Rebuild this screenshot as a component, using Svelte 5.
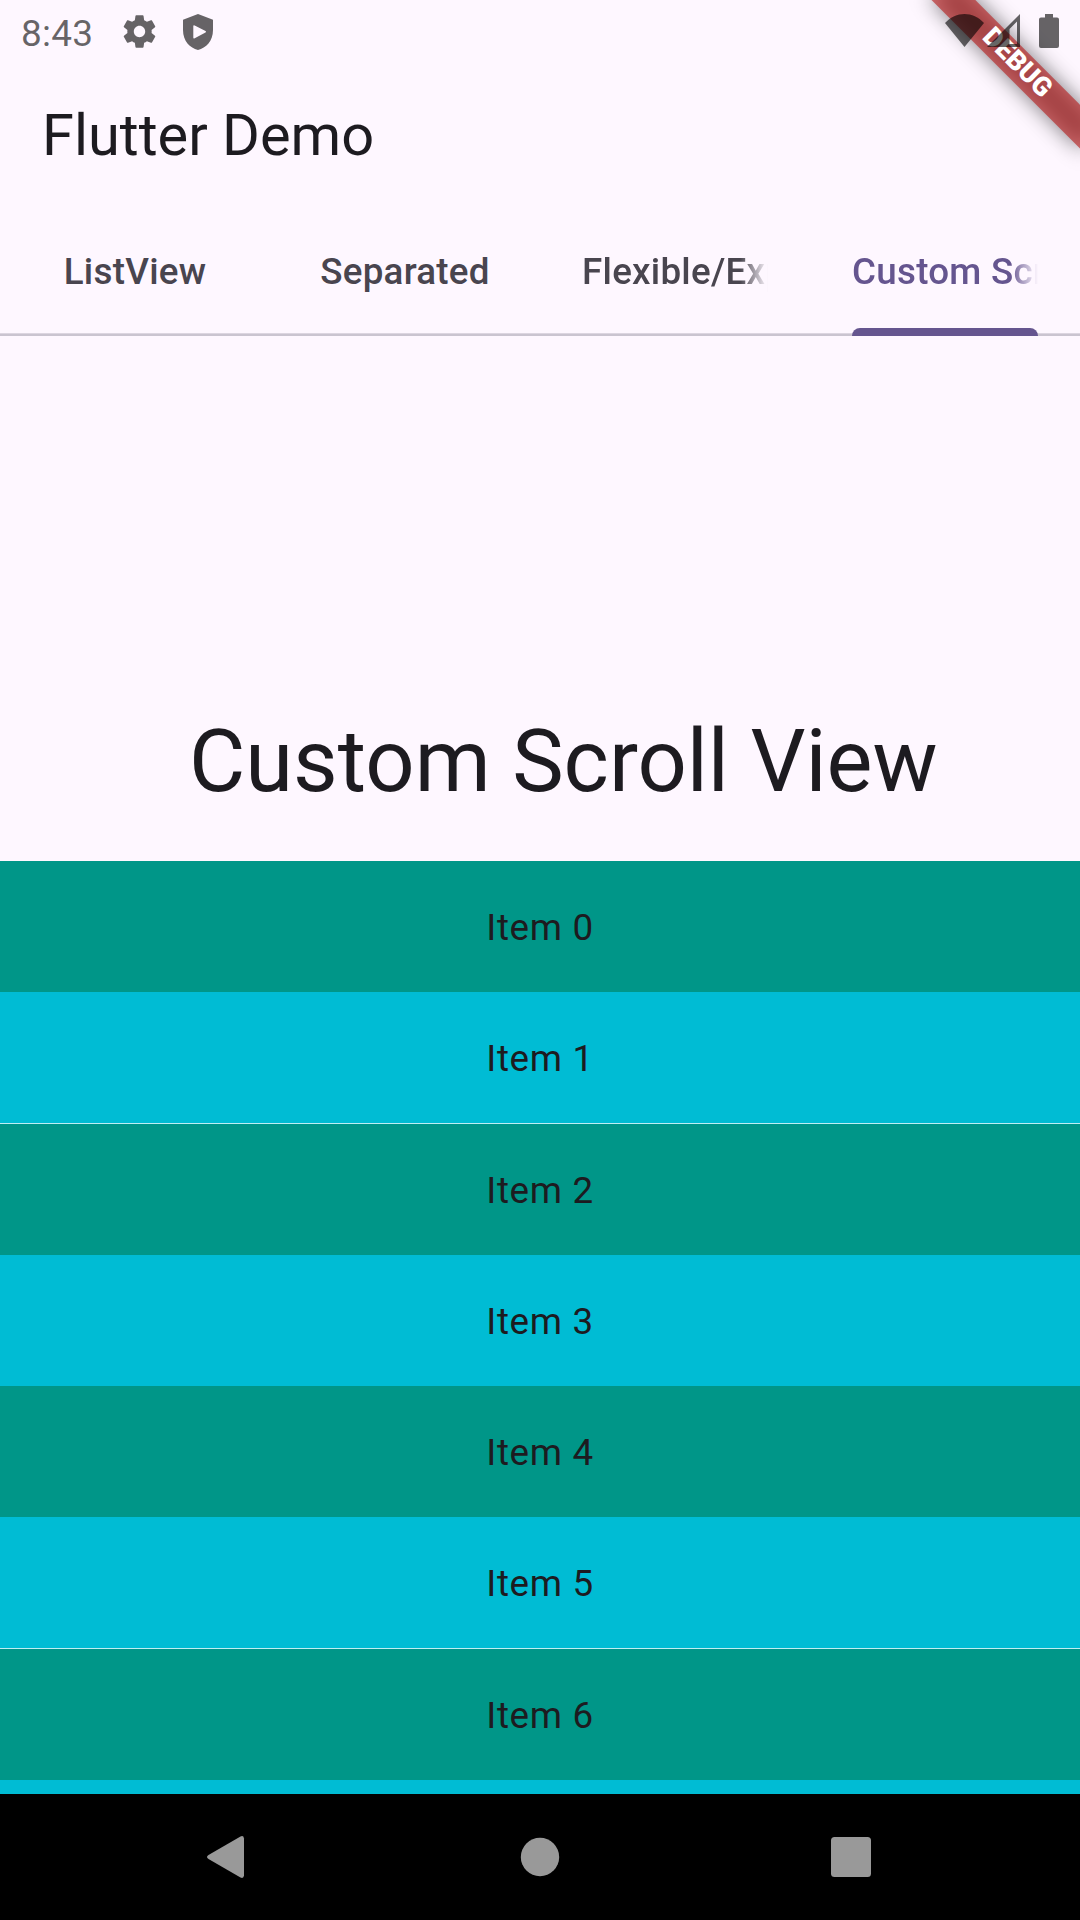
<script>
  const tabs = ['ListView', 'Separated', 'Flexible/Expanded', 'Custom Scroll View'];
  const active = 3;
  const items = Array.from({ length: 8 }, (_, i) => `Item ${i}`);
</script>

<div class="screen">
  <header class="status">
    <div class="left">
      <span class="clock">8:43</span>
      <svg class="gear" viewBox="0 0 24 24"><path d="M19.43 12.98c.04-.32.07-.64.07-.98s-.03-.66-.07-.98l2.11-1.65c.19-.15.24-.42.12-.64l-2-3.46c-.12-.22-.39-.3-.61-.22l-2.49 1c-.52-.4-1.08-.73-1.69-.98l-.38-2.65C14.46 2.18 14.25 2 14 2h-4c-.25 0-.46.18-.49.42l-.38 2.65c-.61.25-1.17.59-1.69.98l-2.49-1c-.23-.09-.49 0-.61.22l-2 3.46c-.13.22-.07.49.12.64l2.11 1.65c-.04.32-.07.65-.07.98s.03.66.07.98l-2.11 1.65c-.19.15-.24.42-.12.64l2 3.46c.12.22.39.3.61.22l2.49-1c.52.4 1.08.73 1.69.98l.38 2.65c.03.24.24.42.49.42h4c.25 0 .46-.18.49-.42l.38-2.65c.61-.25 1.17-.59 1.69-.98l2.49 1c.23.09.49 0 .61-.22l2-3.46c.12-.22.07-.49-.12-.64l-2.11-1.65zM12 15.5c-1.93 0-3.500-1.570-3.500-3.500s1.570-3.500 3.500-3.500 3.500 1.570 3.500 3.500-1.570 3.500-3.500 3.500z"/></svg>
      <svg class="shield" viewBox="0 0 30 36"><path fill-rule="evenodd" d="M15 0 30 5.700V16C30 27 23 34 15 36 7 34 0 27 0 16V5.700ZM10.300 12.300Q10.300 10.800 11.700 11.500L22.500 17Q23.700 17.800 22.500 18.600L11.700 24.200Q10.300 24.800 10.300 23.500Z"/></svg>
    </div>
    <div class="right">
      <svg class="wifi" viewBox="0 0 39 33"><path d="M0 9C11-3 28-3 39 9L19.500 33Z"/></svg>
      <svg class="cell" viewBox="0 0 33 33"><path fill-rule="evenodd" d="M33 0V33H0ZM30 7.500 22.500 15V30H30Z"/></svg>
      <svg class="battery" viewBox="0 0 20 34"><path d="M6 0h8v3.500h4a2 2 0 0 1 2 2V32a2 2 0 0 1-2 2H2a2 2 0 0 1-2-2V5.500a2 2 0 0 1 2-2h4z"/></svg>
    </div>
  </header>

  <h1 class="title">Flutter Demo</h1>

  <nav class="tabs">
    {#each tabs as tab, i}
      <div class="tab" class:active={i === active}>
        <span class="label" class:faded={i > 1}>{tab}</span>
      </div>
    {/each}
  </nav>

  <section class="hero"><h2>Custom Scroll View</h2></section>

  <main class="list">
    {#each items as item}
      <div class="item">{item}</div>
    {/each}
  </main>

  <footer class="navbar">
    <svg viewBox="0 0 48 48"><path d="M43 5.500V42.500Q42.500 46 39.500 44.500L7.500 26Q4.500 24 7.500 22L39.500 3.500Q42.500 2 43 5.500Z"/></svg>
    <svg viewBox="0 0 48 48"><circle cx="24" cy="24" r="19.200"/></svg>
    <svg viewBox="0 0 48 48"><rect x="4" y="4" width="40" height="40" rx="3.500"/></svg>
  </footer>

  <div class="debug"><span class="ribbon">DEBUG</span></div>
</div>

<style>
  :global(body) { background: #fef7ff; }
  .screen {
    position: relative;
    display: flex;
    flex-direction: column;
    width: 1080px;
    height: 1920px;
    overflow: hidden;
    background: #fef7ff;
    color: #1d1b20;
    font-family: Roboto, "Liberation Sans", sans-serif;
  }
  svg { display: block; fill: currentColor; }
  .status {
    position: relative;
    z-index: 2;
    flex: none;
    box-sizing: border-box;
    display: flex;
    justify-content: space-between;
    height: 63px;
    padding: 0 21px;
    color: rgba(0, 0, 0, .6);
  }
  .left, .right { display: flex; align-items: flex-start; }
  .clock { width: 102px; font-size: 37px; letter-spacing: .2px; line-height: 43px; padding-top: 12px; }
  .gear { width: 39px; height: 39px; margin-top: 12px; margin-left: -3px; }
  .shield { width: 30px; height: 36px; margin: 13.500px 0 0 24px; }
  .wifi { width: 39px; height: 33px; margin-top: 13.500px; }
  .cell { width: 33px; height: 33px; margin: 14px 19px 0 3px; }
  .battery { width: 20px; height: 34px; margin-top: 14px; }
  .title {
    flex: none;
    box-sizing: border-box;
    display: flex;
    align-items: center;
    height: 147px;
    margin: 0;
    padding: 0 42px 4px;
    font-size: 57.75px;
    font-weight: 400;
  }
  .tabs {
    flex: none;
    box-sizing: border-box;
    display: grid;
    grid-template-columns: repeat(4, 1fr);
    height: 126px;
    background: linear-gradient(to top, #cac4d0 2px, #dcd5e0 2px, #dcd5e0 3px, transparent 3px);
  }
  .tab {
    display: flex;
    flex-direction: column;
    justify-content: center;
    position: relative;
    margin: 0 42px;
    min-width: 0;
    padding-bottom: 1px;
    color: #49454f;
    font-size: 36.75px;
    font-weight: 500;
    letter-spacing: .2625px;
    line-height: 52.500px;
    text-align: center;
    white-space: nowrap;
  }
  .label.faded {
    overflow: hidden;
    text-align: left;
    mask-image: linear-gradient(to right, #000 calc(100% - 28px), transparent);
  }
  .active { color: #65558f; }
  .active::after {
    content: "";
    position: absolute;
    left: 0;
    right: 0;
    bottom: 0;
    height: 8px;
    border-radius: 8px 8px 0 0;
    background: #65558f;
  }
  .hero {
    flex: none;
    box-sizing: border-box;
    display: flex;
    align-items: flex-end;
    height: 525px;
    padding: 0 0 48px 189px;
  }
  h2 { margin: 0; font-size: 86.625px; font-weight: 400; line-height: 102px; white-space: nowrap; }
  .list { flex: 1; min-height: 0; overflow: hidden; }
  .item {
    box-sizing: border-box;
    display: flex;
    align-items: center;
    justify-content: center;
    height: 131.25px;
    padding-top: 2px;
    background: #009688;
    font-size: 36.75px;
    letter-spacing: .65625px;
  }
  .item:nth-child(even) { background: #00bcd4; }
  .item:nth-child(4n + 2) { box-shadow: inset 0 -1px #bfeef4; }
  .navbar {
    flex: none;
    box-sizing: border-box;
    display: grid;
    grid-template-columns: 48px 48px 48px;
    justify-content: space-between;
    align-items: center;
    height: 126px;
    padding: 0 205px 0 201px;
    background: #000;
    color: #999;
  }
  .navbar svg { width: 48px; height: 48px; }
  .navbar svg:nth-child(2) { margin-left: 2px; }
  .debug {
    position: absolute;
    z-index: 1;
    top: 0;
    left: 1080px;
    width: 0;
    height: 0;
    transform: rotate(45deg);
  }
  .ribbon, .debug::before {
    position: absolute;
    left: -105px;
    top: 73.500px;
    width: 210px;
    height: 31.500px;
  }
  .debug::before { content: ""; background: rgba(0, 0, 0, .5); filter: blur(10.4px); }
  .ribbon {
    background: rgba(183, 28, 28, .627);
    color: #fff;
    font-size: 26.775px;
    font-weight: 900;
    line-height: 29.500px;
    text-align: center;
  }
</style>
